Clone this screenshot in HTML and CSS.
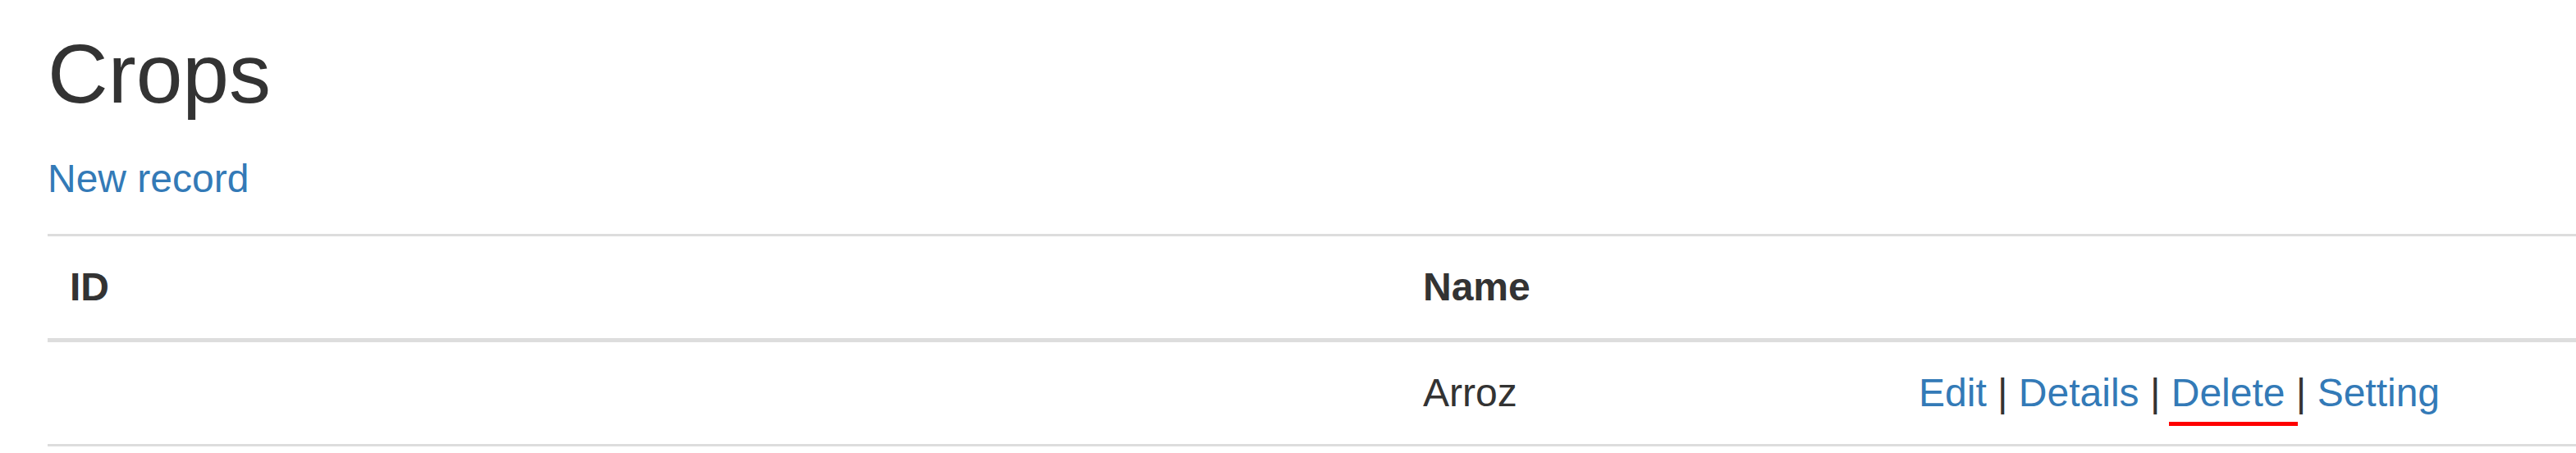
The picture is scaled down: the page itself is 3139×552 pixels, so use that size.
FILE: index.html
```html
<!DOCTYPE html>
<html lang="en">
<head>
<meta charset="utf-8">
<title>Crops</title>
<link rel="stylesheet" href="styles.css">
</head>
<body>
<main class="page">
  <h2 class="title">Crops</h2>
  <p class="actions-top"><a class="link" href="#">New record</a></p>
  <div class="table" role="table">
    <div class="row head-row" role="row">
      <div class="cell head" role="columnheader">ID</div>
      <div class="cell head" role="columnheader">Name</div>
      <div class="cell head" role="columnheader"></div>
    </div>
    <div class="row body-row" role="row">
      <div class="cell" role="cell"></div>
      <div class="cell" role="cell">Arroz</div>
      <div class="cell" role="cell"><a class="link" href="#">Edit</a> | <a class="link" href="#">Details</a> | <span class="marked"><a class="link" href="#">Delete</a> </span>| <a class="link" href="#">Setting</a></div>
    </div>
  </div>
</main>
</body>
</html>
```
FILE: styles.css
```css
html, body {
  margin: 0;
  padding: 0;
  background: #fff;
}

body {
  font-family: "Liberation Sans", Arial, Helvetica, sans-serif;
  font-size: 48px;
  line-height: 67px;
  color: #333;
}

.page {
  padding: 35px 0 0 58px;
}

.title {
  margin: 0 0 38px;
  font-size: 102px;
  line-height: 111px;
  font-weight: 400;
  color: #333;
}

.actions-top {
  margin: 0 0 34px;
}

.link {
  color: #337ab7;
  text-decoration: none;
}

.table {
  border-top: 3px solid #ddd;
}

.row {
  display: grid;
  grid-template-columns: 1649px 604px 1fr;
}

.head-row {
  border-bottom: 5px solid #ddd;
}

.body-row {
  border-bottom: 3px solid #ddd;
}

.cell {
  padding: 28px 27px 29px;
  min-height: 67px;
  line-height: 67px;
  white-space: nowrap;
}

.head {
  font-weight: 700;
}

.marked {
  position: relative;
}

.marked::after {
  content: "";
  position: absolute;
  left: -3px;
  right: -2px;
  bottom: -14px;
  height: 5px;
  background: #ff0000;
}
```
